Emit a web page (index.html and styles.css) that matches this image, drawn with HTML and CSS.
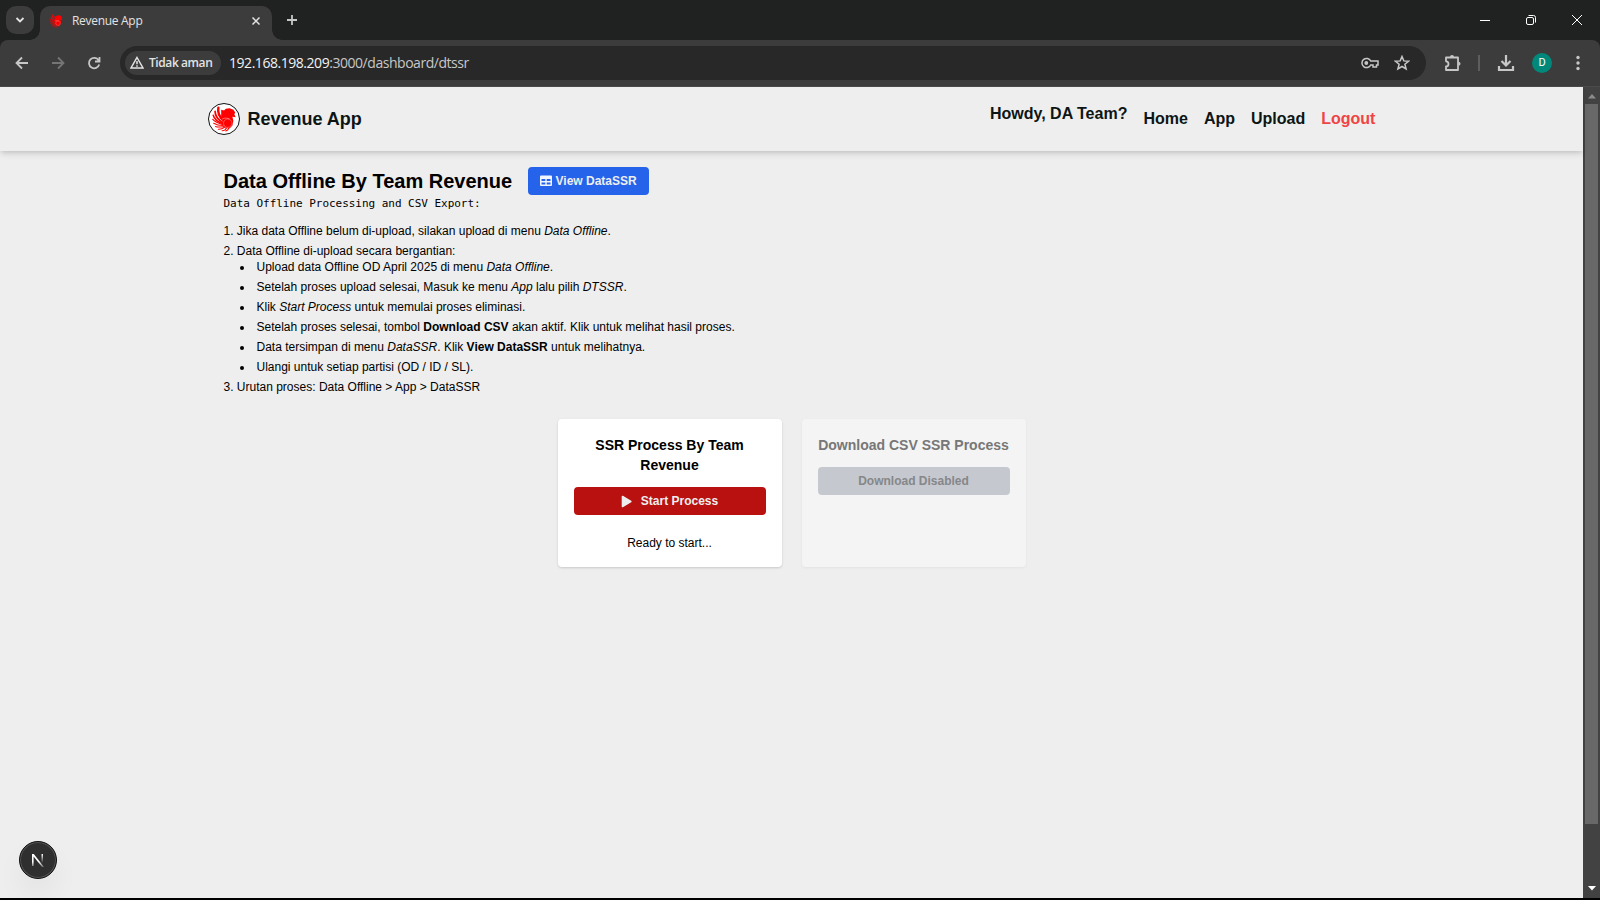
FILE: index.html
```html
<!DOCTYPE html>
<html lang="id">
<head>
<meta charset="utf-8">
<title>Revenue App</title>
<link rel="stylesheet" href="styles.css">
</head>
<body>
<svg class="defs" aria-hidden="true">
  <symbol id="bird" viewBox="0 0 32 32">
    <g fill="none" stroke="#f00" stroke-linecap="round">
      <path d="M10 4C9 9 11 14 16 18" stroke-width="2.6"/>
      <path d="M6.500 8C6.500 13 10 17 15 20" stroke-width="1.9"/>
      <path d="M4.500 12C5.500 16 9 19 15 21" stroke-width="1.600"/>
      <path d="M4 16.500C7 20 11 21 15 22" stroke-width="1.300"/>
      <path d="M5 20.500C8 22.500 11 23 15 23" stroke-width="1.100"/>
      <path d="M7 24C10 25.300 13 24.500 16 24" stroke-width="1.100"/>
      <path d="M10 27C13 27.300 15 26 17 24.500" stroke-width="1.100"/>
      <path d="M14 28.500C16 28.500 18 27 19 25" stroke-width="1.100"/>
      <path d="M18 28.800C20 28 21 27 21 25" stroke-width="1.100"/>
    </g>
    <path fill="#f00" d="M13 6L16 7L18 5L22 4.500L26 6L28 9L27 11L28.500 14L25 13.500L26 18L25 23L22 26L17 25L14 21L15 17L13 14Z"/>
    <circle cx="20" cy="20.500" r="4.500" fill="none" stroke="#fff" stroke-opacity=".55" stroke-width=".6"/>
    <path d="M14 16C17 14.500 20 15 22 16" fill="none" stroke="#fff" stroke-opacity=".6" stroke-width=".7"/>
  </symbol>
</svg>

<div class="tabstrip">
  <div class="tab-search"><svg width="10" height="10" viewBox="0 0 10 10"><path d="M1.500 3L5 6.500L8.500 3" class="line bright w2"/></svg></div>
  <div class="tab">
    <svg class="favicon" width="16" height="16"><use href="#bird"/></svg>
    <span class="tab-title">Revenue App</span>
    <svg width="10" height="10" viewBox="0 0 10 10"><path d="M1.500 1.500L8.500 8.500M8.500 1.500L1.500 8.500" class="line bright w15"/></svg>
  </div>
  <svg class="new-tab" width="12" height="12" viewBox="0 0 12 12"><path d="M6 1V11M1 6H11" class="line w2"/></svg>
  <div class="window-controls">
    <svg width="12" height="12" viewBox="0 0 12 12"><path d="M1 6.500H11" class="line white"/></svg>
    <svg width="12" height="12" viewBox="0 0 12 12"><rect x="1.500" y="3.500" width="7" height="7" rx="1.500" class="line white"/><path d="M3.500 1.500H8.500Q10.500 1.500 10.500 3.500V8.500" class="line white"/></svg>
    <svg width="12" height="12" viewBox="0 0 12 12"><path d="M1 1L11 11M11 1L1 11" class="line white"/></svg>
  </div>
</div>

<div class="toolbar">
  <div class="nav-icons">
    <svg width="14" height="14" viewBox="0 0 14 14"><path d="M13 7H2M7 1.500L1.500 7L7 12.500" class="line w2"/></svg>
    <svg width="14" height="14" viewBox="0 0 14 14"><path d="M1 7H12M7 1.500L12.500 7L7 12.500" class="line dim w2"/></svg>
    <svg width="14" height="14" viewBox="0 0 14 14"><path d="M11.600 4.300A5.200 5.200 0 1 0 12.200 8.500M12.500 1V5.500H8" class="line w2"/></svg>
  </div>
  <div class="omnibox">
    <div class="chip">
      <svg width="14" height="13" viewBox="0 0 14 13"><path d="M7 1.500L13 12H1Z" class="line bright w15"/><path d="M7 5V8.200M7 9.200V10.700" class="line bright w15"/></svg>
      <span>Tidak aman</span>
    </div>
    <div class="url"><span class="host">192.168.198.209</span>:3000/dashboard/dtssr</div>
    <svg width="18" height="12" viewBox="0 0 18 12"><path d="M9.700 4H17V8H15.500V10H12V8H9.700A4.600 4.600 0 1 1 9.700 4Z" class="line w15"/><circle cx="5.300" cy="6" r="1.900" fill="#c7c7c7"/></svg>
    <svg class="star" width="16" height="16" viewBox="0 0 16 16"><path d="M8 1.500L9.800 5.900L14.500 6.200L10.900 9.300L12.100 14L8 11.500L3.900 14L5.100 9.300L1.500 6.200L6.200 5.900Z" class="line w15"/></svg>
  </div>
  <div class="actions">
    <svg width="18" height="18" viewBox="0 0 18 18"><path d="M2 3.500H14V16H2V12.500Q4.500 12.200 4.500 9.900T2 7.300Z" class="line w2 round"/><path d="M6 3A2 2 0 0 1 10 3ZM14.500 7.800A2 2 0 0 1 14.500 11.800Z" fill="#c7c7c7"/></svg>
    <span class="separator"></span>
    <svg class="download" width="18" height="18" viewBox="0 0 18 18"><path d="M9 1V11M4.500 7L9 11.500L13.500 7M2 12V16H16V12" class="line w22"/></svg>
    <span class="avatar">D</span>
    <svg class="more" width="4" height="16" viewBox="0 0 4 16" fill="#c7c7c7"><circle cx="2" cy="2.500" r="1.700"/><circle cx="2" cy="8" r="1.700"/><circle cx="2" cy="13.500" r="1.700"/></svg>
  </div>
</div>

<div class="viewport">
  <div class="page">
    <header class="site-header">
      <div class="brand">
        <span class="logo"><svg width="30" height="30"><use href="#bird"/></svg></span>
        <span>Revenue App</span>
      </div>
      <nav>
        <span class="howdy">Howdy, DA Team?</span>
        <a>Home</a><a>App</a><a>Upload</a><a class="logout">Logout</a>
      </nav>
    </header>
    <main>
      <div class="title-row">
        <h1>Data Offline By Team Revenue</h1>
        <button class="btn view">
          <svg width="12" height="12" viewBox="0 0 12 12"><path d="M1 .5H11Q12 .5 12 1.500V10Q12 11 11 11H1Q0 11 0 10V1.500Q0 .5 1 .5ZM1.500 4V6H5.300V4ZM6.700 4V6H10.500V4ZM1.500 7.500V9.500H5.300V7.500ZM6.700 7.500V9.500H10.500V7.500Z" fill="#f0f4ff" fill-rule="evenodd"/></svg>
          <span>View DataSSR</span>
        </button>
      </div>
      <p class="subtitle">Data Offline Processing and CSV Export:</p>
      <ol>
        <li>Jika data Offline belum di-upload, silakan upload di menu <em>Data Offline</em>.</li>
        <li>Data Offline di-upload secara bergantian:
          <ul>
            <li>Upload data Offline OD April 2025 di menu <em>Data Offline</em>.</li>
            <li>Setelah proses upload selesai, Masuk ke menu <em>App</em> lalu pilih <em>DTSSR</em>.</li>
            <li>Klik <em>Start Process</em> untuk memulai proses eliminasi.</li>
            <li>Setelah proses selesai, tombol <b>Download CSV</b> akan aktif. Klik untuk melihat hasil proses.</li>
            <li>Data tersimpan di menu <em>DataSSR</em>. Klik <b>View DataSSR</b> untuk melihatnya.</li>
            <li>Ulangi untuk setiap partisi (OD / ID / SL).</li>
          </ul>
        </li>
        <li>Urutan proses: Data Offline &gt; App &gt; DataSSR</li>
      </ol>
      <div class="cards">
        <section class="card">
          <h2>SSR Process By Team Revenue</h2>
          <button class="btn start">
            <svg width="11" height="13" viewBox="0 0 11 13"><path d="M1.500 1.500L9.800 6.500L1.500 11.500Z" fill="#eee" stroke="#eee" stroke-width="1.600" stroke-linejoin="round"/></svg>
            <span>Start Process</span>
          </button>
          <p class="status">Ready to start...</p>
        </section>
        <section class="card disabled">
          <h2>Download CSV SSR Process</h2>
          <button class="btn off">Download Disabled</button>
        </section>
      </div>
    </main>
    <div class="dev-badge">
      <svg width="14" height="14" viewBox="0 0 14 14">
        <defs>
          <linearGradient id="fade" x1="0" y1="0" x2="0" y2="1"><stop offset=".6" stop-color="#fff"/><stop offset="1" stop-color="#fff" stop-opacity=".25"/></linearGradient>
          <linearGradient id="fade2" x1="0" y1="0" x2="0" y2="1"><stop offset="0" stop-color="#fff"/><stop offset="1" stop-color="#fff" stop-opacity="0"/></linearGradient>
        </defs>
        <path d="M1 13V1H2.800L13 14H11L2.600 3.500V13Z" fill="url(#fade)"/>
        <path d="M10.500 1H12V10H10.500Z" fill="url(#fade2)"/>
      </svg>
    </div>
  </div>
  <div class="scrollbar">
    <svg width="8" height="5" viewBox="0 0 8 5"><path d="M0 4.500L4 0L8 4.500Z" fill="#8b8b8b"/></svg>
    <div class="thumb"></div>
    <svg width="8" height="5" viewBox="0 0 8 5"><path d="M0 0H8L4 4.500Z" fill="#fff"/></svg>
  </div>
</div>
</body>
</html>
```
FILE: styles.css
```css
* { box-sizing: border-box; margin: 0; padding: 0; }
body {
  width: 1600px; height: 900px; overflow: hidden;
  display: flex; flex-direction: column;
  background: linear-gradient(#202221 60px, #000 60px);
  font: 12px/16px "Liberation Sans", Arial, sans-serif;
  color: #000;
}
.defs { position: absolute; width: 0; height: 0; }
svg { flex: none; display: block; }
.line { fill: none; stroke: #c7c7c7; stroke-width: 1; }
.w15 { stroke-width: 1.5; }
.w2 { stroke-width: 1.8; }
.w22 { stroke-width: 2.2; }
.round { stroke-linejoin: round; }
.bright { stroke: #e3e3e3; }
.white { stroke: #fff; }
.dim { stroke: #757575; }

/* Browser chrome */
.tabstrip {
  height: 40px; flex: none; display: flex; align-items: flex-start;
  padding: 6px 17px 0 6px; background: #202221;
  font-family: "Open Sans", "Noto Sans", sans-serif;
}
.tab-search {
  width: 28px; height: 28px; border-radius: 10px; background: #3c3c3c;
  display: flex; align-items: center; justify-content: center;
}
.tab {
  position: relative; width: 232px; height: 34px; margin-left: 6px;
  padding: 0 11px 5px 8px; display: flex; align-items: center;
  background: #3c3c3c; border-radius: 10px 10px 0 0; color: #e3e3e3;
}
.tab::before, .tab::after {
  content: ""; position: absolute; bottom: 0; width: 10px; height: 10px;
}
.tab::before { left: -10px; background: radial-gradient(circle at 0 0, transparent 9.5px, #3c3c3c 10px); }
.tab::after { right: -10px; background: radial-gradient(circle at 100% 0, transparent 9.5px, #3c3c3c 10px); }
.tab-title { margin-left: 8px; flex: 1; font-size: 12px; letter-spacing: -.3px; }
.new-tab { margin: 8px 0 0 14px; }
.window-controls { margin: 8px 0 0 auto; display: flex; gap: 34px; }
.toolbar {
  height: 47px; flex: none; display: flex; align-items: center;
  padding: 0 20px 1px 15px; border-bottom: 1px solid #4a4a4a;
  background: #3c3c3c; border-radius: 8px 8px 0 0;
  font-family: "Open Sans", "Noto Sans", sans-serif;
}
.nav-icons { display: flex; gap: 22px; width: 105px; }
.omnibox {
  width: 1306px; height: 34px; border-radius: 17px; background: #282828;
  display: flex; align-items: center; padding: 0 16px 0 5px;
}
.chip {
  width: 96px; height: 24px; border-radius: 12px; background: #3c3c3c; color: #e3e3e3;
  display: flex; align-items: center; gap: 5px; padding-left: 5px;
  font-size: 12px; font-weight: 600; white-space: nowrap; letter-spacing: -.42px;
}
.url { flex: 1; margin-left: 8px; font-size: 14px; color: #c7c7c7; letter-spacing: -.46px; }
.host { color: #f2f2f2; }
.star { margin-left: 15px; }
.actions { flex: 1; display: flex; align-items: center; }
.actions > :first-child { margin-left: 18px; }
.separator { width: 2px; height: 16px; margin-left: 16px; background: #5e5e5e; }
.download { margin-left: 17px; }
.avatar {
  width: 20px; height: 20px; border-radius: 50%; margin-left: 17px;
  background: #00897b; color: #fff; text-align: center; font: 11px/20px Roboto, sans-serif;
}
.more { margin-left: auto; }

/* Page */
.viewport { height: 811px; flex: none; display: flex; }
.page { position: relative; width: 1583px; background: #eee; }
.site-header {
  height: 64px; padding: 0 207px 0 208px;
  display: flex; align-items: center; justify-content: space-between;
  box-shadow: 0 4px 6px -1px rgba(0,0,0,.12), 0 2px 4px -1px rgba(0,0,0,.08);
  font-size: 16px; line-height: 24px; font-weight: bold; color: #0d1514;
}
.brand { display: flex; align-items: center; gap: 7.400px; font-size: 18px; }
.logo {
  width: 32px; height: 32px; border: 1px solid #111; border-radius: 50%;
  background: #fff; overflow: hidden;
}
nav { display: flex; gap: 16px; margin-right: .6px; }
.howdy { position: relative; top: -5.500px; }
.logout { color: #ef4444; }
main { padding: 16px 207px 0 223.500px; }
.title-row { display: flex; align-items: center; gap: 15.500px; height: 28px; }
h1 { font-size: 20px; line-height: 28px; }
.btn {
  height: 28px; border: 0; border-radius: 4px; color: #eee;
  font: bold 12px/16px "Liberation Sans", Arial, sans-serif;
  display: flex; align-items: center; justify-content: center;
}
.view { width: 121px; background: #2563eb; gap: 4px; }
.subtitle { font: 11px/18px "DejaVu Sans Mono", monospace; letter-spacing: -.03px; }
ol { margin-top: 10px; list-style: decimal inside; }
li { margin-bottom: 4px; }
ul { list-style: none; padding-left: 33px; }
ul li { position: relative; }
ul li::before {
  content: ""; position: absolute; left: -16.500px; top: 7px;
  width: 4px; height: 4px; border-radius: 50%; background: #000;
}
.cards { display: flex; justify-content: center; gap: 20px; margin: 24px 16.500px 0 0; }
.card {
  width: 224px; height: 148px; padding: 16px; border-radius: 4px; background: #fff;
  box-shadow: 0 1px 3px rgba(0,0,0,.1), 0 1px 2px rgba(0,0,0,.06); text-align: center;
}
.card h2 { font-size: 14px; line-height: 20px; margin-bottom: 12px; }
.card .btn { width: 192px; }
.start { background: #b91010; gap: 9px; }
.status { margin-top: 20px; }
.disabled { background: #f4f4f4; box-shadow: 0 1px 3px rgba(0,0,0,.05); color: #777; }
.disabled h2 { white-space: nowrap; margin-left: -4px; margin-right: -4px; }
.off { background: #c5c8cf; color: #858789; }
.dev-badge {
  position: absolute; left: 19px; top: 754px; width: 38px; height: 38px; border-radius: 50%;
  background: #2f2f2f; border: 1px solid #111;
  box-shadow: inset 0 0 0 1px #555, 0 16px 32px -8px rgba(0,0,0,.14);
  display: flex; align-items: center; justify-content: center;
}
.scrollbar {
  width: 17px; background: #424242; display: flex; flex-direction: column;
  align-items: center; padding: 7px 0 7px;
}
.thumb { width: 13px; height: 720px; margin: 5px 0 auto; background: #686868; }
```
